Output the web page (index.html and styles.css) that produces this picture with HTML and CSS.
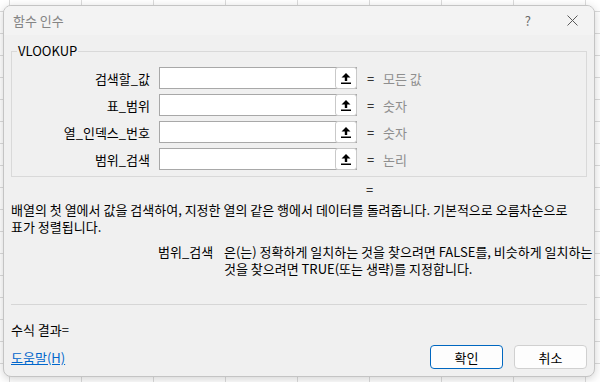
FILE: index.html
```html
<!DOCTYPE html>
<html>
<head>
	<meta charset="utf-8">
	<title>함수 인수</title>
	<link rel="stylesheet" href="styles.css">
</head>
<body>
	<div class="dialog">
		<div class="titlebar">
			<span class="title">함수 인수</span>
			<div class="controls">
				<span class="help-btn">?</span>
				<svg class="close-btn" width="11" height="11" viewBox="0 0 11 11">
					<path d="M0.5 0.5 L10.5 10.5 M10.5 0.5 L0.5 10.5" stroke="#5a5a5a" stroke-width="1" fill="none"/>
				</svg>
			</div>
		</div>

		<div class="content">
			<fieldset class="group">
				<legend>VLOOKUP</legend>

				<div class="arg-row">
					<label class="arg-label">검색할_값</label>
					<div class="field">
						<input type="text">
						<button class="ref-btn"><svg width="10" height="11" viewBox="0 0 10 11"><path d="M5 0 L9.5 4.5 H6.2 V8 H3.8 V4.5 H0.5 Z" fill="#000"/><rect x="0" y="9.5" width="10" height="1.5" fill="#000"/></svg></button>
					</div>
					<span class="eq">=</span>
					<span class="arg-value">모든 값</span>
				</div>

				<div class="arg-row">
					<label class="arg-label">표_범위</label>
					<div class="field">
						<input type="text">
						<button class="ref-btn"><svg width="10" height="11" viewBox="0 0 10 11"><path d="M5 0 L9.5 4.5 H6.2 V8 H3.8 V4.5 H0.5 Z" fill="#000"/><rect x="0" y="9.5" width="10" height="1.5" fill="#000"/></svg></button>
					</div>
					<span class="eq">=</span>
					<span class="arg-value">숫자</span>
				</div>

				<div class="arg-row">
					<label class="arg-label">열_인덱스_번호</label>
					<div class="field">
						<input type="text">
						<button class="ref-btn"><svg width="10" height="11" viewBox="0 0 10 11"><path d="M5 0 L9.5 4.5 H6.2 V8 H3.8 V4.5 H0.5 Z" fill="#000"/><rect x="0" y="9.5" width="10" height="1.5" fill="#000"/></svg></button>
					</div>
					<span class="eq">=</span>
					<span class="arg-value">숫자</span>
				</div>

				<div class="arg-row">
					<label class="arg-label">범위_검색</label>
					<div class="field">
						<input type="text">
						<button class="ref-btn"><svg width="10" height="11" viewBox="0 0 10 11"><path d="M5 0 L9.5 4.5 H6.2 V8 H3.8 V4.5 H0.5 Z" fill="#000"/><rect x="0" y="9.5" width="10" height="1.5" fill="#000"/></svg></button>
					</div>
					<span class="eq">=</span>
					<span class="arg-value">논리</span>
				</div>
			</fieldset>

			<div class="result-eq">=</div>

			<p class="desc">배열의 첫 열에서 값을 검색하여, 지정한 열의 같은 행에서 데이터를 돌려줍니다. 기본적으로 오름차순으로 표가 정렬됩니다.</p>

			<div class="arg-help">
				<span class="arg-help-name">범위_검색</span>
				<p class="arg-help-text">은(는) 정확하게 일치하는 것을 찾으려면 FALSE를, 비슷하게 일치하는 것을 찾으려면 TRUE(또는 생략)를 지정합니다.</p>
			</div>

			<hr class="sep">

			<div class="formula">수식 결과=</div>

			<div class="footer">
				<a href="#" class="help-link">도움말(H)</a>
				<div class="buttons">
					<button class="btn btn-default">확인</button>
					<button class="btn">취소</button>
				</div>
			</div>
		</div>
	</div>
</body>
</html>
```

FILE: styles.css
```css
html, body {
	height: 100%;
}

body {
	margin: 0;
	padding: 5px 5px 5px 3px;
	box-sizing: border-box;
	background-color: #fff;
	background-image:
		linear-gradient(to right, #dcdcdc 1px, transparent 1px),
		linear-gradient(to bottom, #dcdcdc 1px, transparent 1px);
	background-size: 72px 22px;
	background-position: 9px 11px;
	font-family: "Noto Sans CJK KR", "Noto Sans", sans-serif;
	font-size: 13px;
	color: #000;
	word-break: keep-all;
}

.dialog {
	width: 592px;
	height: 372px;
	box-sizing: border-box;
	display: flex;
	flex-direction: column;
	background: #f0f0f0;
	border: 1px solid #c4c4c4;
	border-radius: 8px;
	box-shadow: 0 2px 10px rgba(0, 0, 0, 0.18);
	overflow: hidden;
}

.titlebar {
	height: 29px;
	display: flex;
	align-items: center;
	justify-content: space-between;
	padding: 0 16px 0 9px;
	background: #f3f3f3;
}

.title {
	font-size: 13px;
	color: #858585;
}

.controls {
	display: flex;
	align-items: center;
	gap: 36px;
}

.help-btn {
	font-size: 13px;
	color: #6a6a6a;
}

.content {
	flex: 1;
	display: flex;
	flex-direction: column;
	padding: 0 7px 7px;
}

.group {
	margin: 8px 0 0;
	padding: 8px 0 6px;
	border: 1px solid #d9d9d9;
	min-width: 0;
}

.group legend {
	margin-left: 5px;
	padding: 0 1px;
	line-height: 16px;
}

.arg-row {
	display: flex;
	align-items: center;
	height: 22px;
	margin-bottom: 5px;
}

.arg-row:last-child {
	margin-bottom: 0;
}

.arg-label {
	width: 138px;
	margin-right: 9px;
	text-align: right;
}

.field {
	width: 198px;
	height: 22px;
	box-sizing: border-box;
	display: flex;
	background: #fff;
	border: 1px solid #a8a8a8;
}

.field input {
	flex: 1;
	min-width: 0;
	border: none;
	outline: none;
	padding: 0 3px;
	background: transparent;
}

.ref-btn {
	width: 22px;
	height: 22px;
	margin: -1px -1px 0 0;
	padding: 0;
	display: flex;
	align-items: center;
	justify-content: center;
	background: #fff;
	border: 1px solid #c9c9c9;
	border-radius: 3px;
}

.eq {
	width: 16px;
	margin-left: 10px;
}

.arg-value {
	color: #8e8e8e;
}

.result-eq {
	margin-top: 4px;
	padding-left: 355px;
	line-height: 17px;
}

.desc {
	margin: 3px 0 0;
	line-height: 17px;
}

.arg-help {
	display: flex;
	margin-top: 8px;
	padding-left: 147px;
}

.arg-help-name {
	width: 66px;
	flex: none;
	line-height: 17px;
}

.arg-help-text {
	margin: 0;
	width: 374px;
	flex: none;
	line-height: 17px;
}

.sep {
	margin: 27px 0 0;
	border: none;
	border-top: 1px solid #d6d6d6;
}

.formula {
	margin-top: 16px;
	line-height: 17px;
}

.footer {
	margin-top: auto;
	display: flex;
	align-items: center;
	justify-content: space-between;
}

.help-link {
	color: #0066cc;
}

.buttons {
	display: flex;
	gap: 11px;
}

.btn {
	width: 73px;
	height: 24px;
	padding: 0;
	font-family: inherit;
	font-size: 13px;
	background: #fdfdfd;
	border: 1px solid #d0d0d0;
	border-radius: 4px;
}

.btn-default {
	border-color: #0067c0;
}
```
